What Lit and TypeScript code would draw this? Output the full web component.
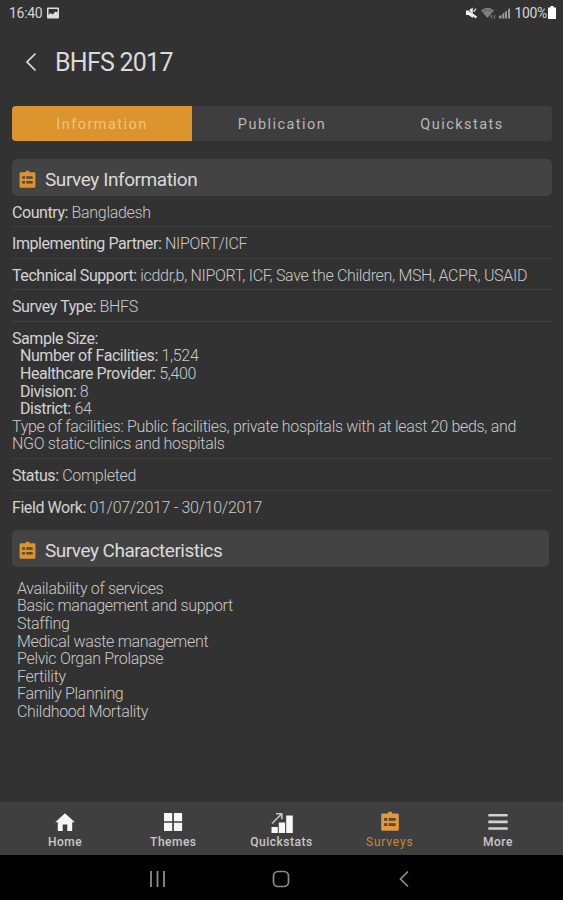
import { LitElement, html, css } from "lit";
import { customElement } from "lit/decorators.js";
import { classMap } from "lit/directives/class-map.js";

const clipboard = html`<svg class="clip" viewBox="0 0 18 20">
  <path fill="currentColor" fill-rule="evenodd" d="M1.600 2.400h5a2.500 2.500 0 0 1 4.800 0h5A1.400 1.400 0 0 1 17.800 3.800v14.600a1.400 1.400 0 0 1-1.400 1.400H1.600A1.400 1.400 0 0 1 .2 18.400V3.800A1.400 1.400 0 0 1 1.600 2.400zM3.200 7v2.800h3V7zm4.600 0v2.800h6.800V7zM3.200 12.200V15h3v-2.800zm4.600 0V15h6.800v-2.800z"/>
  <path stroke="#6e4d20" stroke-width="1.500" fill="none" d="M3.200 8.400h3M7.800 8.400h6.800M3.200 13.600h3M7.800 13.600h6.800"/>
</svg>`;

const icons = {
  home: html`<svg class="ico" viewBox="0 0 20 20"><path fill="#f6f6f6" d="M10 1.200 19.800 10.300H17.200V19H12.300V12.600H7.700V19H2.800V10.300H.2z"/></svg>`,
  themes: html`<svg class="ico" viewBox="0 0 20 20"><path fill="#f6f6f6" d="M1 1h8.200v8.200H1zM10.900 1h8.200v8.200h-8.200zM1 10.800h8.200V19H1zM10.900 10.800h8.200V19h-8.200z"/></svg>`,
  stats: html`<svg class="ico wide" viewBox="0 0 24 22"><path fill="#f6f6f6" d="M1.500 15h6.300v6H1.500zM8.800 10.500h6.300V21H8.800zM16.200 3.500h6.600V21h-6.600z"/><path d="M2 11.500 11 2.500M6 1.700h5.800v5.600" fill="none" stroke="#c4c4c4" stroke-width="1.600"/></svg>`,
  surveys: clipboard,
  more: html`<svg class="ico" viewBox="0 0 20 20"><path fill="#d2d2d2" d="M.3 2h19.400v2.600H.3zM.3 8.600h19.400v2.600H.3zM.3 15.200h19.400v2.600H.3z"/></svg>`,
};

@customElement("app-root")
class AppRoot extends LitElement {
  static styles = css`
    :host { display: flex; flex-direction: column; height: 900px; width: 563px; background: #323232; color: #cacaca; font-family: Roboto, sans-serif; overflow: hidden; }
    * { box-sizing: border-box; }
    svg { display: block; flex: none; }
    .status { display: flex; align-items: center; height: 24px; padding: 1px 7px 0 9px; font-size: 14px; color: #d4d4d4; }
    .status .time { letter-spacing: -.3px; margin-right: 5px; }
    .status .right { display: flex; align-items: center; margin-left: auto; }
    .status .wifi { margin: 0 3px 0 4px; }
    .status .pct { letter-spacing: -.35px; margin: 0 1px 0 4px; }
    .head { display: flex; align-items: center; height: 76px; padding-left: 25px; }
    .head .title { margin: 2px 0 0 18px; font-size: 25px; font-weight: 400; letter-spacing: -.75px; color: #dadada; line-height: 30px; }
    .tabs { display: flex; margin: 6px 11px 0 12px; height: 35px; border-radius: 4px; overflow: hidden; background: #3e3e3e; flex: none; }
    .tab { flex: 1; display: flex; align-items: center; justify-content: center; font-size: 14.5px; letter-spacing: 1.45px; color: #b8b8b8; padding-top: 1px; }
    .tab.on { background: #dc942f; color: #f0c27e; }
    .sec { display: flex; align-items: center; height: 36.5px; margin: 18px 11px 0 12px; padding-left: 7px; border-radius: 5px; background: #434343; flex: none; }
    .sec.two { margin: 8px 14px 0 12px; }
    .sec .clip { color: #dc942f; width: 17px; height: 18px; margin-top: 3px; }
    .sec .label { margin: 6px 0 0 9px; font-size: 19px; font-weight: 400; letter-spacing: -.42px; color: #dadada; line-height: 24px; }
    .sec.two .label { letter-spacing: -.5px; }
    .rows { margin: 0 11px 0 12px; font-size: 16px; line-height: 17.6px; letter-spacing: -.31px; }
    .row { padding: 8px 0 5px; border-bottom: 1px solid #404040; font-weight: 300; white-space: nowrap; }
    .row:last-child { border-color: transparent; }
    .row b { font-weight: 400; color: #d2d2d2; letter-spacing: -.43px; }
    .sub { padding-left: 8px; }
    .list { padding: 13px 0 0 17px; font-size: 16px; line-height: 17.6px; font-weight: 300; letter-spacing: -.31px; }
    .nav { display: flex; margin-top: auto; height: 53px; background: #3f3f3f; padding: 0 11px; flex: none; }
    .item { flex: 1; display: flex; flex-direction: column; align-items: center; padding: 10px 0 0; font-size: 12px; letter-spacing: .5px; font-weight: 500; color: #c8c8c8; }
    .item.on { color: #c98a35; font-weight: 400; letter-spacing: .8px; }
    .item .clip { width: 18px; height: 20px; margin-top: -1px; margin-bottom: 1px; color: #e09a3c; }
    .ico { width: 20px; height: 20px; }
    .wide { width: 24px; height: 22px; margin-bottom: -2px; }
    .cap { margin-top: 3px; line-height: 14px; }
    .sys { display: flex; justify-content: center; align-items: center; height: 45px; background: #000; flex: none; gap: 105px; padding: 2px 2px 0 0; }
  `;

  row(label: string, value: string) {
    return html`<div class="row"><b>${label}</b> <span>${value}</span></div>`;
  }

  render() {
    const tabs = ["Information", "Publication", "Quickstats"];
    const facts = [["Number of Facilities:", "1,524"], ["Healthcare Provider:", "5,400"], ["Division:", "8"], ["District:", "64"]];
    const traits = ["Availability of services", "Basic management and support", "Staffing", "Medical waste management", "Pelvic Organ Prolapse", "Fertility", "Family Planning", "Childhood Mortality"];
    const nav: [string, unknown][] = [["Home", icons.home], ["Themes", icons.themes], ["Quickstats", icons.stats], ["Surveys", icons.surveys], ["More", icons.more]];
    return html`
      <div class="status">
        <span class="time">16:40</span>
        <svg width="12" height="12" viewBox="0 0 12 12"><path fill="#dedede" fill-rule="evenodd" d="M1 .5h10a1 1 0 0 1 1 1v9a1 1 0 0 1-1 1H1a1 1 0 0 1-1-1v-9a1 1 0 0 1 1-1zM1.500 2v6l2.300-2 1.800 1.600L8.500 4.500l2 1V2z"/></svg>
        <div class="right">
          <svg width="11" height="12" viewBox="0 0 11 12"><path fill="#f2f2f2" d="M0 3.500h2.500L6.800.5v10.500L2.500 8H0zM7.200 4.200 9.600 1.200l.8.8L8.200 5z"/><path d="M.3.8 10.500 11" stroke="#323232" stroke-width="1"/><path d="M4 6l6.500 4.500" stroke="#f2f2f2" stroke-width="2.200"/></svg>
          <svg class="wifi" width="15" height="12" viewBox="0 0 15 12"><path d="M0 3.500Q6.500-2 13 3.500L6.500 11z" fill="#808080"/><path d="M1.800 5.200Q6.500 1.200 11.200 5.200" fill="none" stroke="#4c4c4c" stroke-width=".8"/><path d="M10.500 8v3.500M13.500 8v3.500" stroke="#777" stroke-width="1.300"/></svg>
          <svg width="12" height="12" viewBox="0 0 12 12"><path d="M0 11.500V9l2.500-1v3.500zM3.300 11.500V7l2-1.500v6zM6 11.500V5l2-1.500v8zM9 11.500V2.500L11 1v10.500z" fill="#989898"/></svg>
          <span class="pct">100%</span>
          <svg width="8" height="13" viewBox="0 0 8 13"><path fill="#fff" d="M2.500 0h3v1.500H8V13H0V1.500h2.500z"/></svg>
        </div>
      </div>
      <div class="head">
        <svg width="12" height="20" viewBox="0 0 12 20"><path d="M10.500 1.500 2 10l8.500 8.500" fill="none" stroke="#dedede" stroke-width="1.700"/></svg>
        <h1 class="title">BHFS 2017</h1>
      </div>
      <div class="tabs">${tabs.map((t, i) => html`<div class=${classMap({ tab: true, on: i === 0 })}>${t}</div>`)}</div>
      <div class="sec">${clipboard}<h2 class="label">Survey Information</h2></div>
      <div class="rows">
        ${this.row("Country:", "Bangladesh")}
        ${this.row("Implementing Partner:", "NIPORT/ICF")}
        ${this.row("Technical Support:", "icddr,b, NIPORT, ICF, Save the Children, MSH, ACPR, USAID")}
        ${this.row("Survey Type:", "BHFS")}
        <div class="row">
          <div><b>Sample Size:</b></div>
          ${facts.map(([k, v]) => html`<div class="sub"><b>${k}</b> ${v}</div>`)}
          <div>Type of facilities: Public facilities, private hospitals with at least 20 beds, and<br>NGO static-clinics and hospitals</div>
        </div>
        ${this.row("Status:", "Completed")}
        ${this.row("Field Work:", "01/07/2017 - 30/10/2017")}
      </div>
      <div class="sec two">${clipboard}<h2 class="label">Survey Characteristics</h2></div>
      <div class="list">${traits.map((t) => html`<div>${t}</div>`)}</div>
      <div class="nav">${nav.map(([t, icon]) => html`<div class=${classMap({ item: true, on: t === "Surveys" })}>${icon}<span class="cap">${t}</span></div>`)}</div>
      <div class="sys">
        <svg width="18" height="16" viewBox="0 0 18 16"><path d="M2 0v16M8.500 0v16M15 0v16" stroke="#8c8c8c" stroke-width="1.800"/></svg>
        <svg width="18" height="18" viewBox="0 0 18 18"><rect x="1.500" y="1.500" width="15" height="15" rx="4.500" fill="none" stroke="#8c8c8c" stroke-width="1.700"/></svg>
        <svg width="18" height="18" viewBox="0 0 18 18"><path d="M13 1.500 5.500 9l7.500 7.500" fill="none" stroke="#8c8c8c" stroke-width="1.700"/></svg>
      </div>`;
  }
}
